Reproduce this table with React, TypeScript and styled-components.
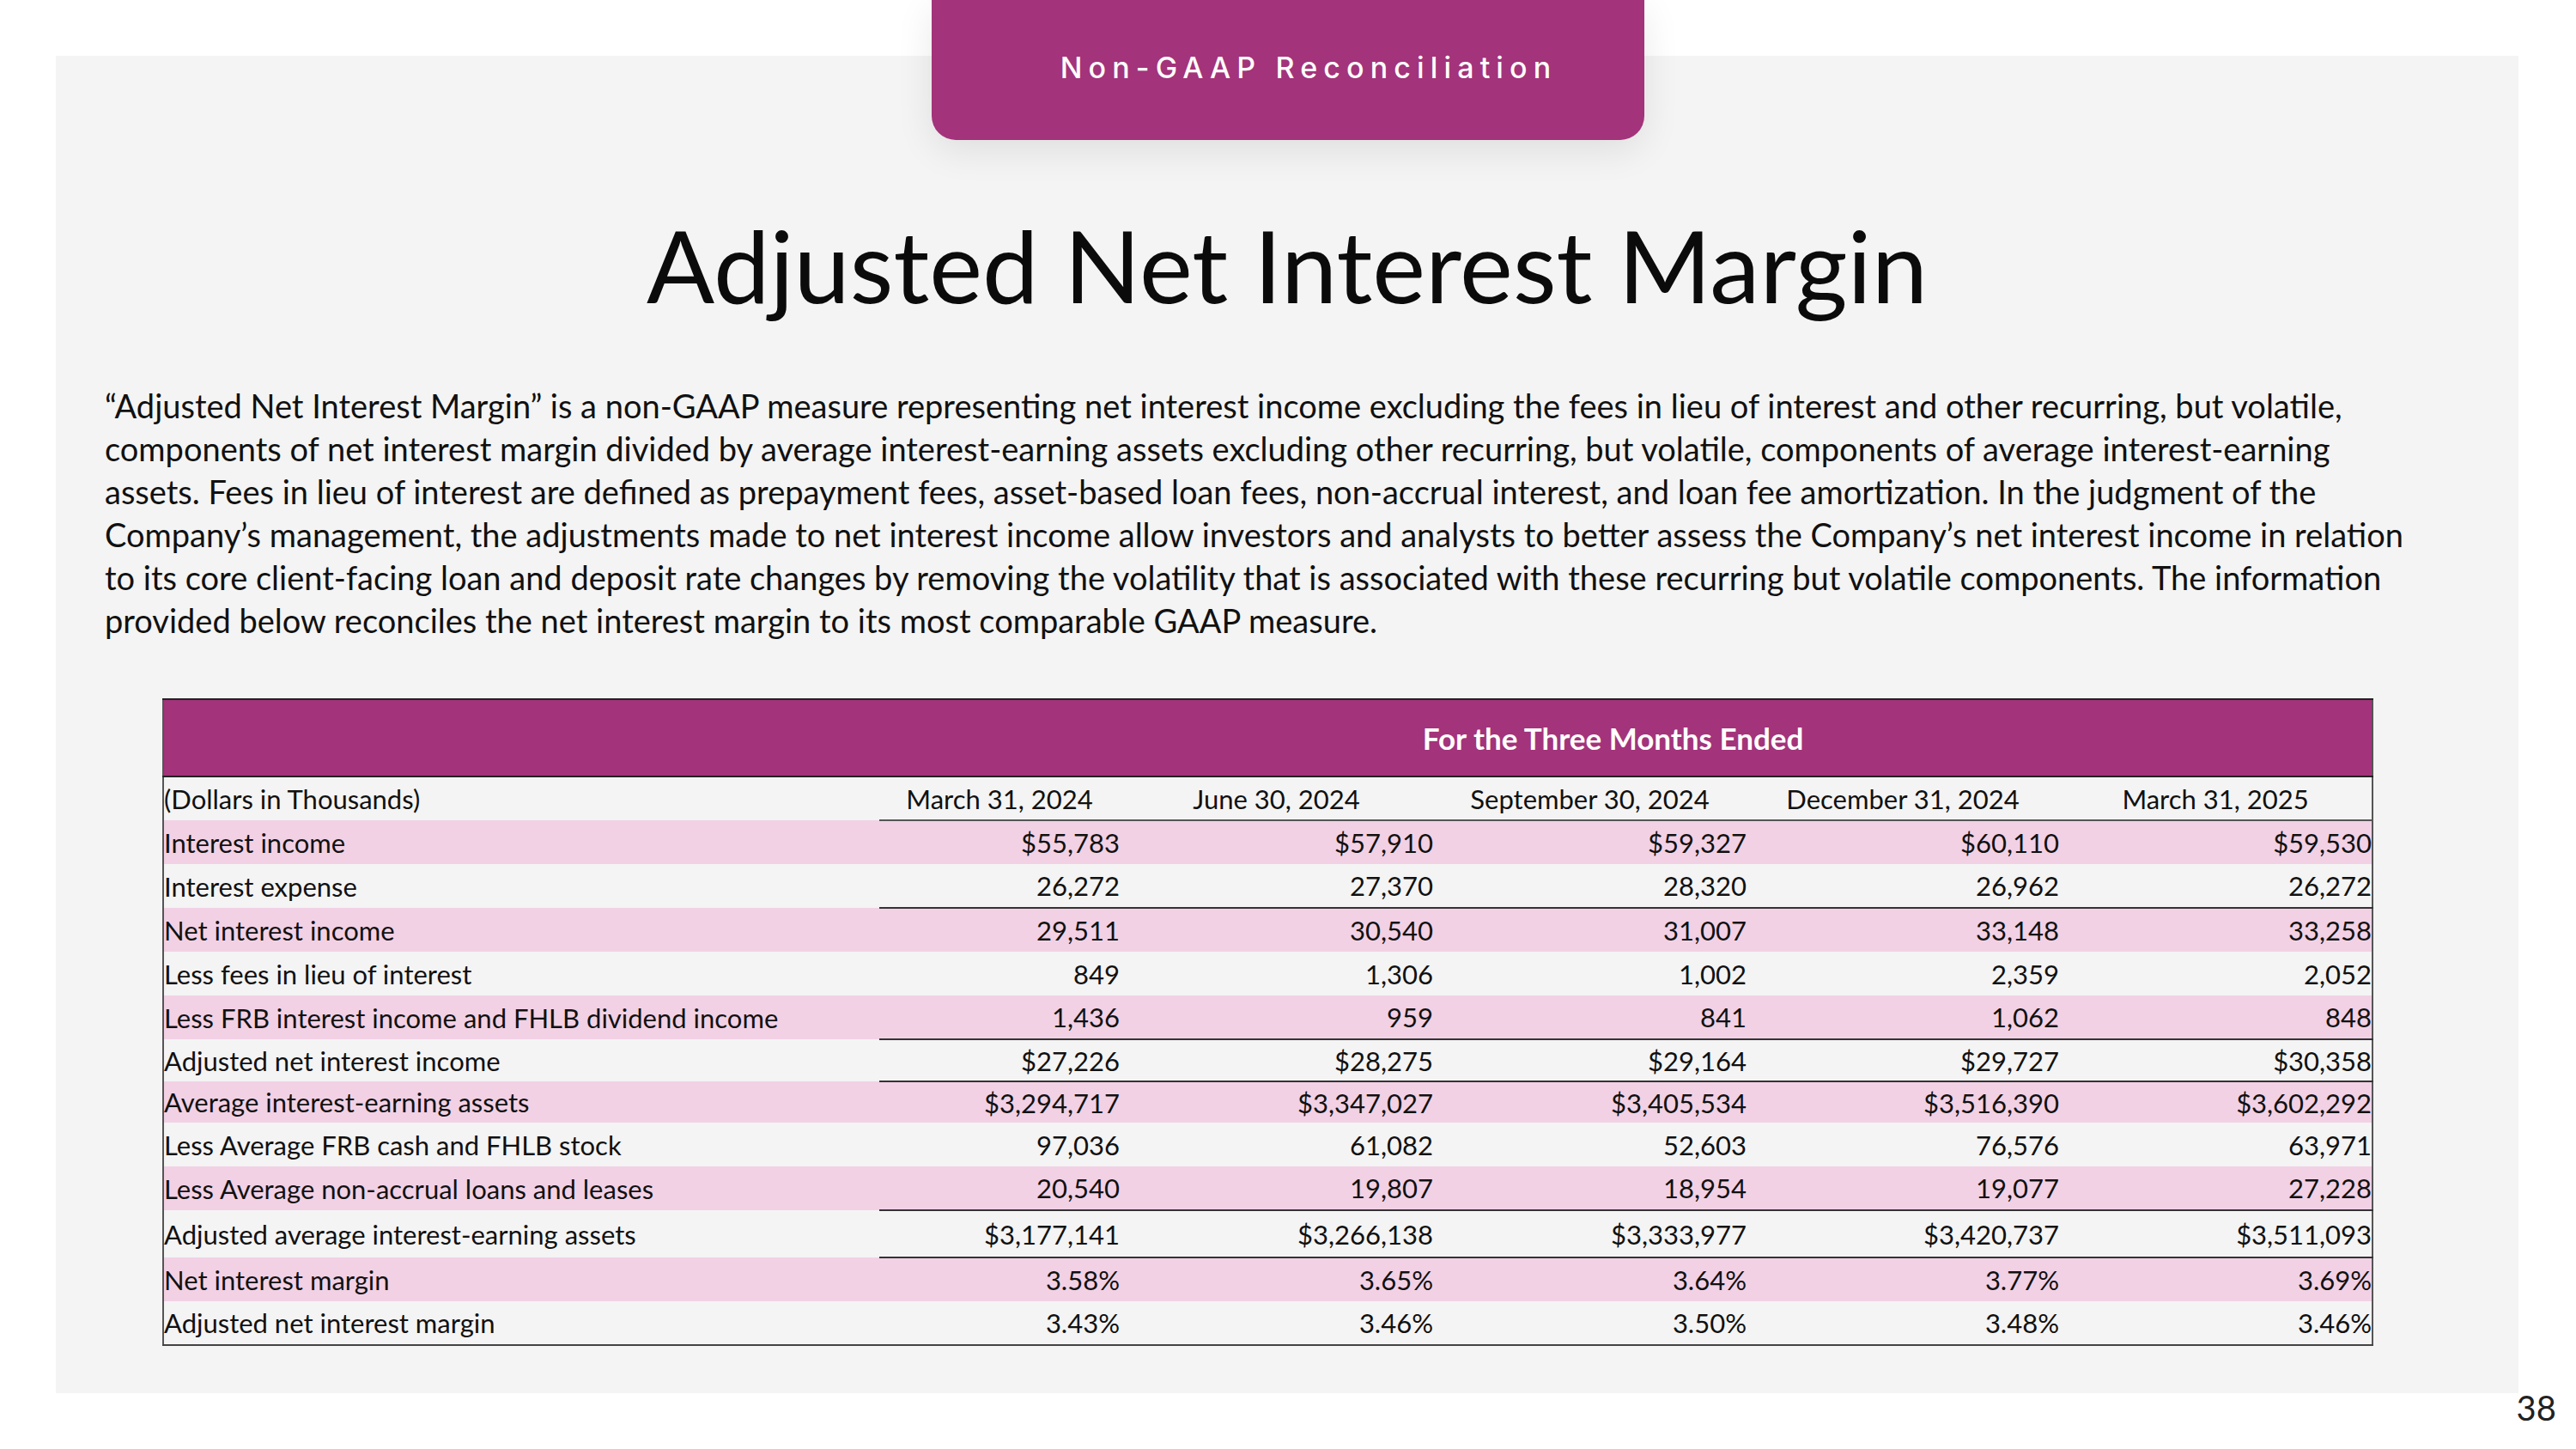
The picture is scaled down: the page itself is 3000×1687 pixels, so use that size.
import React from "react";
import styled, { createGlobalStyle } from "styled-components";

const GlobalStyle = createGlobalStyle`
  html, body {
    margin: 0;
    padding: 0;
    background: #ffffff;
  }
  body {
    font-family: Lato, "Open Sans", sans-serif;
    color: #111;
  }
`;

type Row = {
  label: string;
  values: string[];
  shade?: boolean;
  rule?: boolean;
  h?: number;
};

const dates = [
  "March 31, 2024",
  "June 30, 2024",
  "September 30, 2024",
  "December 31, 2024",
  "March 31, 2025",
];

const rows: Row[] = [
  { label: "Interest income", values: ["$55,783", "$57,910", "$59,327", "$60,110", "$59,530"], shade: true },
  { label: "Interest expense", values: ["26,272", "27,370", "28,320", "26,962", "26,272"], rule: true },
  { label: "Net interest income", values: ["29,511", "30,540", "31,007", "33,148", "33,258"], shade: true },
  { label: "Less fees in lieu of interest", values: ["849", "1,306", "1,002", "2,359", "2,052"] },
  {
    label: "Less FRB interest income and FHLB dividend income",
    values: ["1,436", "959", "841", "1,062", "848"],
    shade: true,
    rule: true,
  },
  { label: "Adjusted net interest income", values: ["$27,226", "$28,275", "$29,164", "$29,727", "$30,358"], rule: true, h: 49 },
  {
    label: "Average interest-earning assets",
    values: ["$3,294,717", "$3,347,027", "$3,405,534", "$3,516,390", "$3,602,292"],
    shade: true,
    h: 48,
  },
  { label: "Less Average FRB cash and FHLB stock", values: ["97,036", "61,082", "52,603", "76,576", "63,971"] },
  {
    label: "Less Average non-accrual loans and leases",
    values: ["20,540", "19,807", "18,954", "19,077", "27,228"],
    shade: true,
    rule: true,
  },
  {
    label: "Adjusted average interest-earning assets",
    values: ["$3,177,141", "$3,266,138", "$3,333,977", "$3,420,737", "$3,511,093"],
    rule: true,
    h: 55,
  },
  { label: "Net interest margin", values: ["3.58%", "3.65%", "3.64%", "3.77%", "3.69%"], shade: true },
  { label: "Adjusted net interest margin", values: ["3.43%", "3.46%", "3.50%", "3.48%", "3.46%"] },
];

export default function App() {
  return (
    <>
      <GlobalStyle />
      <Page>
        <Tab>
          <TabText>Non-GAAP Reconciliation</TabText>
        </Tab>
        <Panel>
          <Title>Adjusted Net Interest Margin</Title>
          <Intro>
            “Adjusted Net Interest Margin” is a non-GAAP measure representing net interest income excluding the fees in
            lieu of interest and other recurring, but volatile,
            <br />
            components of net interest margin divided by average interest-earning assets excluding other recurring, but
            volatile, components of average interest-earning
            <br />
            assets. Fees in lieu of interest are defined as prepayment fees, asset-based loan fees, non-accrual interest,
            and loan fee amortization. In the judgment of the
            <br />
            Company’s management, the adjustments made to net interest income allow investors and analysts to better
            assess the Company’s net interest income in relation
            <br />
            to its core client-facing loan and deposit rate changes by removing the volatility that is associated with
            these recurring but volatile components. The information
            <br />
            provided below reconciles the net interest margin to its most comparable GAAP measure.
          </Intro>
          <Table>
            <colgroup>
              <col style={{ width: 834 }} />
              <col style={{ width: 280 }} />
              <col style={{ width: 365 }} />
              <col style={{ width: 365 }} />
              <col style={{ width: 364 }} />
              <col style={{ width: 365 }} />
            </colgroup>
            <thead>
              <Band>
                <th />
                <BandCell colSpan={5}>For the Three Months Ended</BandCell>
              </Band>
            </thead>
            <tbody>
              <BodyRow $h={51}>
                <Label>(Dollars in Thousands)</Label>
                {dates.map((d) => (
                  <DateCell key={d}>{d}</DateCell>
                ))}
              </BodyRow>
              {rows.map((r) => (
                <BodyRow key={r.label} $shade={r.shade} $h={r.h ?? 51}>
                  <Label>{r.label}</Label>
                  {r.values.map((v, i) => (
                    <Value key={i} $rule={r.rule}>
                      {v}
                    </Value>
                  ))}
                </BodyRow>
              ))}
            </tbody>
          </Table>
        </Panel>
        <PageNum>38</PageNum>
      </Page>
    </>
  );
}

const Page = styled.div`
  position: relative;
  width: 3000px;
  height: 1687px;
  padding: 65px 67px 0 65px;
  box-sizing: border-box;
  background: #ffffff;
`;

const Panel = styled.div`
  height: 1557px;
  background: #f4f4f4;
  display: flex;
  flex-direction: column;
  align-items: center;
  padding-top: 185px;
  box-sizing: border-box;
`;

const Tab = styled.div`
  position: absolute;
  top: 0;
  left: 1085px;
  width: 830px;
  height: 163px;
  background: #a3337a;
  border-radius: 0 0 28px 28px;
  box-shadow: 0 12px 44px rgba(0, 0, 0, 0.09);
  display: flex;
  justify-content: center;
  padding: 62px 0 0 48px;
  box-sizing: border-box;
  z-index: 2;
`;

const TabText = styled.div`
  font-family: Inter, "Noto Sans", sans-serif;
  font-size: 34px;
  font-weight: 500;
  letter-spacing: 0.21em;
  color: #ffffff;
  line-height: 1;
`;

const Title = styled.h1`
  margin: 0;
  font-family: Lato, "Open Sans", sans-serif;
  font-weight: 400;
  font-size: 117px;
  line-height: 1;
  color: #0b0b0b;
`;

const Intro = styled.p`
  align-self: stretch;
  margin: 80px 0 0 0;
  padding-left: 57px;
  font-family: Lato, "Open Sans", sans-serif;
  font-size: 38px;
  line-height: 50px;
  color: #111;
  white-space: nowrap;
`;

const Table = styled.table`
  align-self: flex-start;
  margin: 66px 0 0 124px;
  border-collapse: collapse;
  table-layout: fixed;
  width: 2573px;
  font-family: Lato, "Open Sans", sans-serif;
  font-size: 31px;
  color: #111;
  border-left: 2px solid #555;
  border-right: 2px solid #555;
  border-bottom: 2px solid #444;
`;

const Band = styled.tr`
  height: 90px;
  background: #a3337a;
  border-top: 2px solid #222;
  border-bottom: 2px solid #222;
`;

const BandCell = styled.th`
  color: #ffffff;
  font-weight: 700;
  font-size: 35px;
  text-align: center;
  padding-right: 30px;
`;

const BodyRow = styled.tr<{ $shade?: boolean; $h: number }>`
  height: ${(p) => p.$h}px;
  background: ${(p) => (p.$shade ? "#f2d1e5" : "#f4f4f4")};
`;

const Label = styled.td`
  padding: 0;
  text-align: left;
  white-space: nowrap;
`;

const DateCell = styled.td`
  padding: 0;
  text-align: center;
  white-space: nowrap;
  border-bottom: 2px solid #555;
`;

const Value = styled.td<{ $rule?: boolean }>`
  padding: 0;
  text-align: right;
  white-space: nowrap;
  border-bottom: ${(p) => (p.$rule ? "2px solid #333" : "none")};
`;

const PageNum = styled.div`
  position: absolute;
  right: 23px;
  top: 1615px;
  font-family: Lato, "Open Sans", sans-serif;
  font-size: 40px;
  color: #222;
`;
